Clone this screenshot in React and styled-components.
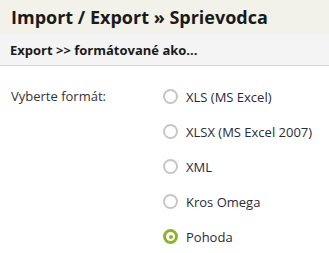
import React, { useState } from "react";
import styled, { createGlobalStyle } from "styled-components";

const Global = createGlobalStyle`
  html, body { margin: 0; padding: 0; background: #fff; }
  body { font-family: "Open Sans", "Liberation Sans", sans-serif; }
`;

const Header = styled.div`
  background: #f3f2ea;
  height: 34px;
  display: flex;
  align-items: center;
  padding-left: 11px;
`;

const Title = styled.h1`
  margin: 0;
  font-size: 18px;
  font-weight: 700;
  color: #1a1a1a;
`;

const SubHeader = styled.div`
  background: #f4f4f4;
  height: 31px;
  border-bottom: 1px solid #d6d6d6;
  display: flex;
  align-items: center;
  padding-left: 10px;
  font-size: 13px;
  font-weight: 700;
  color: #1a1a1a;
`;

const Body = styled.div`
  display: grid;
  grid-template-columns: 163px 1fr;
  padding-top: 13px;
`;

const Label = styled.div`
  padding-left: 11px;
  font-size: 13px;
  color: #333;
  line-height: 35px;
  height: 35px;
`;

const Options = styled.div`
  display: flex;
  flex-direction: column;
`;

const Option = styled.label`
  display: flex;
  align-items: center;
  height: 35px;
  gap: 8px;
  font-size: 13px;
  color: #2a2a3a;
  cursor: pointer;
`;

const Radio = styled.span`
  box-sizing: border-box;
  width: 15px;
  height: 15px;
  border-radius: 50%;
  border: ${(p) => (p.$checked ? "3.5px solid #8cb52b" : "2px solid #c6c6c6")};
  display: flex;
  align-items: center;
  justify-content: center;
  &::after {
    content: "";
    display: ${(p) => (p.$checked ? "block" : "none")};
    width: 4px;
    height: 4px;
    border-radius: 50%;
    background: #8cb52b;
  }
`;

const formats = ["XLS (MS Excel)", "XLSX (MS Excel 2007)", "XML", "Kros Omega", "Pohoda"];

export default function App() {
  const [sel, setSel] = useState("Pohoda");
  return (
    <>
      <Global />
      <Header>
        <Title>Import / Export » Sprievodca</Title>
      </Header>
      <SubHeader>Export &gt;&gt; formátované ako...</SubHeader>
      <Body>
        <Label>Vyberte formát:</Label>
        <Options>
          {formats.map((f) => (
            <Option key={f} onClick={() => setSel(f)}>
              <Radio $checked={sel === f} />
              {f}
            </Option>
          ))}
        </Options>
      </Body>
    </>
  );
}
